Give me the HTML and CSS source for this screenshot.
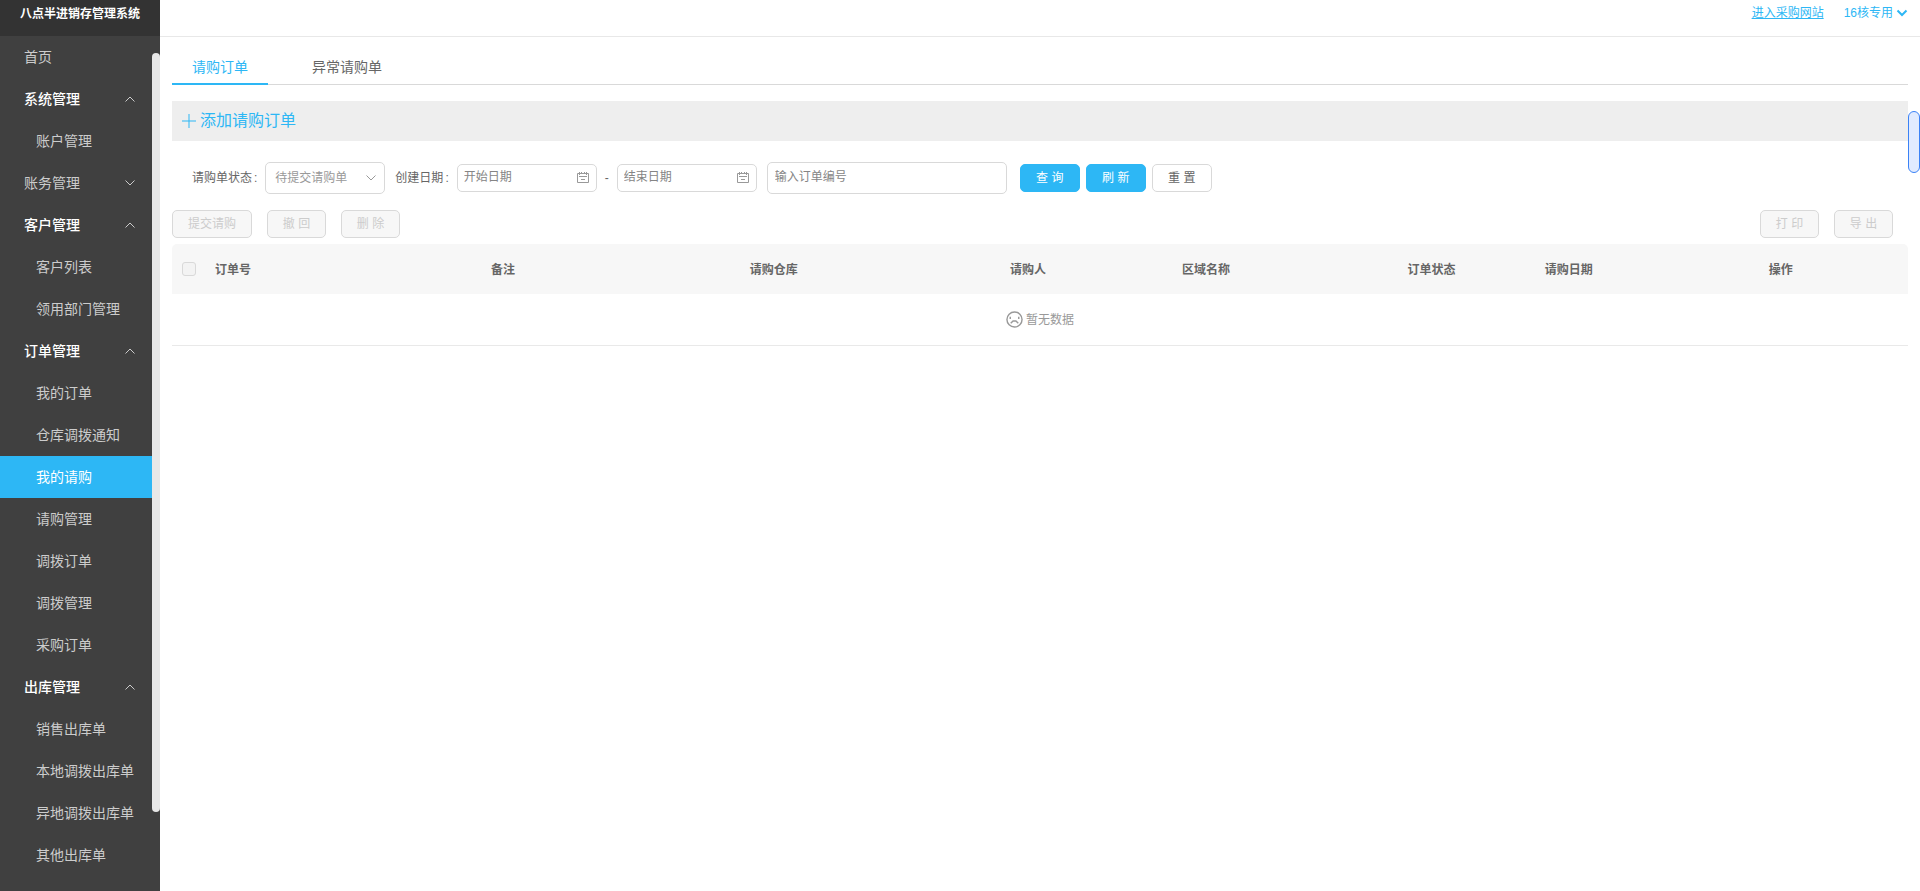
FILE: index.html
```
<!DOCTYPE html>
<html lang="zh-CN">
<head>
<meta charset="utf-8">
<title>八点半进销存管理系统</title>
<link rel="stylesheet" href="styles.css">
</head>
<body>
<svg class="sprite" aria-hidden="true">
  <symbol id="up" viewBox="0 0 12 12"><path d="M1.500 8.500 6 4l4.500 4.500"/></symbol>
  <symbol id="down" viewBox="0 0 12 12"><path d="M1.500 3.500 6 8l4.500-4.500"/></symbol>
  <symbol id="calendar" viewBox="0 0 14 14"><path d="M1.500 2.500h11v9h-11zM3.500 1v3M5.500 1v2M8.500 1v2M10.500 1v3M3 5.500h8M5 8.500h4"/></symbol>
</svg>
<div class="app">
  <aside class="sidebar">
    <h1 class="brand">八点半进销存管理系统</h1>
    <div class="sidebar-body">
      <nav class="menu">
        <a class="menu-item" href="#">首页</a>
        <button class="menu-item group open" type="button">系统管理<svg class="icon"><use href="#up"/></svg></button>
        <a class="menu-item sub" href="#">账户管理</a>
        <button class="menu-item group" type="button">账务管理<svg class="icon"><use href="#down"/></svg></button>
        <button class="menu-item group open" type="button">客户管理<svg class="icon"><use href="#up"/></svg></button>
        <a class="menu-item sub" href="#">客户列表</a>
        <a class="menu-item sub" href="#">领用部门管理</a>
        <button class="menu-item group open" type="button">订单管理<svg class="icon"><use href="#up"/></svg></button>
        <a class="menu-item sub" href="#">我的订单</a>
        <a class="menu-item sub" href="#">仓库调拨通知</a>
        <a class="menu-item sub active" href="#">我的请购</a>
        <a class="menu-item sub" href="#">请购管理</a>
        <a class="menu-item sub" href="#">调拨订单</a>
        <a class="menu-item sub" href="#">调拨管理</a>
        <a class="menu-item sub" href="#">采购订单</a>
        <button class="menu-item group open" type="button">出库管理<svg class="icon"><use href="#up"/></svg></button>
        <a class="menu-item sub" href="#">销售出库单</a>
        <a class="menu-item sub" href="#">本地调拨出库单</a>
        <a class="menu-item sub" href="#">异地调拨出库单</a>
        <a class="menu-item sub" href="#">其他出库单</a>
      </nav>
      <div class="scroll-thumb"></div>
    </div>
  </aside>
  <div class="main">
    <header class="topbar">
      <a class="shop-link" href="#">进入采购网站</a>
      <button class="user" type="button">16核专用<svg class="icon"><use href="#down"/></svg></button>
    </header>
    <main class="content">
      <div class="tabs">
        <button class="tab active" type="button">请购订单</button>
        <button class="tab" type="button">异常请购单</button>
      </div>
      <div class="add-bar">
        <button class="add" type="button"><svg class="plus" viewBox="0 0 16 16"><path d="M8 1v14M1 8h14"/></svg>添加请购订单</button>
      </div>
      <form class="filters">
        <label class="label" for="status">请购单状态<span class="colon">:</span></label>
        <div class="select-box">
          <select id="status" class="select"><option>待提交请购单</option></select>
          <svg class="icon"><use href="#down"/></svg>
        </div>
        <label class="label next" for="start">创建日期<span class="colon">:</span></label>
        <div class="date-box">
          <input id="start" class="date" type="text" placeholder="开始日期">
          <svg class="calendar"><use href="#calendar"/></svg>
        </div>
        <span class="dash">-</span>
        <div class="date-box">
          <input class="date" type="text" placeholder="结束日期" aria-label="结束日期">
          <svg class="calendar"><use href="#calendar"/></svg>
        </div>
        <input class="search" type="text" placeholder="输入订单编号" aria-label="订单编号">
        <div class="filter-buttons">
          <button class="btn primary" type="button">查 询</button>
          <button class="btn primary" type="button">刷 新</button>
          <button class="btn" type="button">重 置</button>
        </div>
      </form>
      <div class="actions">
        <button class="btn wide" type="button" disabled>提交请购</button>
        <button class="btn" type="button" disabled>撤 回</button>
        <button class="btn" type="button" disabled>删 除</button>
        <button class="btn push" type="button" disabled>打 印</button>
        <button class="btn" type="button" disabled>导 出</button>
      </div>
      <table class="orders">
        <colgroup>
          <col class="c-check"><col class="c-no"><col class="c-note"><col class="c-store"><col class="c-person"><col class="c-area"><col class="c-state"><col class="c-date"><col>
        </colgroup>
        <thead>
          <tr>
            <th class="check-cell"><input class="check" type="checkbox" aria-label="全选" disabled></th>
            <th>订单号</th><th>备注</th><th>请购仓库</th><th>请购人</th><th>区域名称</th><th>订单状态</th><th>请购日期</th><th>操作</th>
          </tr>
        </thead>
        <tbody>
          <tr><td colspan="9">
            <div class="empty">
              <svg class="frown" viewBox="0 0 18 18"><circle cx="9" cy="9" r="8"/><path d="M5 13 7.500 10.500h3L13 13M4.500 6v2.500M13.500 6v2.500"/></svg>
              <span>暂无数据</span>
            </div>
          </td></tr>
        </tbody>
      </table>
    </main>
  </div>
</div>
<button class="drawer-handle" type="button" aria-label="展开"></button>
</body>
</html>
```
FILE: styles.css
```
* { box-sizing: border-box; }
body {
  margin: 0;
  background: #fff;
  color: #666;
  font: 12px/18px "Liberation Sans", "Noto Sans CJK SC", sans-serif;
}
button, input, select { font: inherit; color: inherit; margin: 0; }
button { padding: 0; border: 0; background: none; cursor: pointer; }
svg { fill: none; stroke: currentColor; }
.sprite { display: none; }
.icon { width: 12px; height: 12px; flex: none; }

.app { display: flex; min-height: 100vh; }
.sidebar {
  flex: none;
  display: flex;
  flex-direction: column;
  width: 160px;
  background: #404040;
}
.brand {
  height: 36px;
  margin: 0;
  padding-top: 5px;
  background: #333;
  color: #fff;
  font-size: 12px;
  line-height: 18px;
  font-weight: 700;
  text-align: center;
}
.sidebar-body { flex: 1; display: flex; }
.menu { flex: 1; }
.menu-item {
  display: flex;
  align-items: center;
  width: 100%;
  height: 42px;
  padding: 0 16px 0 24px;
  color: #ccc;
  font-size: 14px;
  text-decoration: none;
  white-space: nowrap;
}
.menu-item.group { justify-content: space-between; }
.menu-item.open { color: #fff; font-weight: 500; }
.menu-item .icon { color: #ccc; }
.menu-item.sub { padding: 0 0 0 36px; }
.menu-item.active { background: #2db7f5; color: #fff; }
.scroll-thumb {
  width: 8px;
  margin: 17px 0 79px;
  border-radius: 4px;
  background: #e8e8e8;
}

.main { flex: 1; min-width: 0; }
.topbar {
  display: flex;
  justify-content: flex-end;
  align-items: flex-start;
  gap: 20px;
  height: 37px;
  padding: 4px 12px 0 0;
  border-bottom: 1px solid #e8e8e8;
  color: #2db7f5;
}
.shop-link { color: inherit; }
.user { display: flex; align-items: center; gap: 3px; }
.user .icon { stroke-width: 2; }
.content { padding: 0 12px; }

.tabs {
  display: flex;
  gap: 24px;
  height: 48px;
  border-bottom: 1px solid #d9d9d9;
}
.tab {
  height: 48px;
  padding: 14px 20px 0;
  border-bottom: 2px solid transparent;
  font-size: 14px;
}
.tab.active { border-color: #2db7f5; color: #2db7f5; }

.add-bar {
  display: flex;
  height: 40px;
  margin-top: 16px;
  padding-left: 9px;
  background: #eee;
}
.add {
  display: flex;
  align-items: center;
  gap: 3px;
  color: #2db7f5;
  font-size: 16px;
}
.plus { width: 16px; height: 16px; }

.filters {
  display: flex;
  align-items: center;
  margin-top: 21px;
  padding-left: 20px;
}
.label { white-space: nowrap; }
.label.next { margin-left: 10px; }
.colon { margin: 0 8px 0 2px; }
.select-box, .date-box { display: grid; align-items: center; }
.select-box > *, .date-box > * { grid-area: 1 / 1; }
.select-box .icon, .date-box .calendar {
  justify-self: end;
  pointer-events: none;
  color: #999;
}
.select-box .icon { margin-right: 8px; }
.date-box .calendar { width: 14px; height: 14px; margin-right: 7px; }
.select, .date, .search {
  border: 1px solid #d9d9d9;
  border-radius: 5px;
  background: #fff;
  outline: 0;
}
.select {
  appearance: none;
  width: 120px;
  height: 32px;
  padding: 0 24px 0 9px;
  color: #999;
}
.date { width: 140px; height: 28px; padding: 0 24px 2px 6px; }
.search { width: 240px; height: 32px; margin-left: 10px; padding: 0 7px 2px; }
.date::placeholder, .search::placeholder { color: #858585; opacity: 1; }
.dash { width: 20px; text-align: center; }
.filter-buttons { display: flex; gap: 6px; margin-left: 13px; }
.btn {
  width: 60px;
  height: 28px;
  border: 1px solid #d9d9d9;
  border-radius: 5px;
  background: #fff;
  color: #666;
  white-space: pre;
}
.btn.primary { border-color: #2db7f5; background: #2db7f5; color: #fff; }
.btn:disabled { width: 59px; background: #f7f7f7; color: #ccc; cursor: default; }
.btn.wide { width: 80px; }
.actions {
  display: flex;
  gap: 15px;
  margin-top: 16px;
  padding-right: 15px;
}
.push { margin-left: auto; }

.orders {
  width: 100%;
  margin-top: 6px;
  border-spacing: 0;
  table-layout: fixed;
}
.c-check { width: 31px; }
.c-no { width: 15.9%; }
.c-note { width: 14.9%; }
.c-store { width: 15%; }
.c-person { width: 9.9%; }
.c-area { width: 13%; }
.c-state { width: 7.9%; }
.c-date { width: 12.9%; }
.orders th {
  height: 50px;
  padding: 2px 12px 0;
  background: #f7f7f7;
  font-weight: 700;
  text-align: left;
}
.orders th:first-child { border-top-left-radius: 5px; }
.orders th:last-child { border-top-right-radius: 5px; }
.orders .check-cell { padding: 0 0 0 10px; }
.check {
  display: block;
  appearance: none;
  width: 14px;
  height: 14px;
  border: 1px solid #d9d9d9;
  border-radius: 3px;
  background: #f3f3f3;
}
.orders td {
  height: 52px;
  padding: 0;
  border-bottom: 1px solid #e9e9e9;
  color: #999;
}
.empty { display: flex; justify-content: center; align-items: flex-start; gap: 3px; }
.frown { width: 17px; height: 17px; stroke-width: 1.500; }

.drawer-handle {
  position: fixed;
  top: 111px;
  right: 0;
  width: 12px;
  height: 62px;
  border: 1px solid #3b82f6;
  border-radius: 6px;
  background: #e1ebff;
}
```
